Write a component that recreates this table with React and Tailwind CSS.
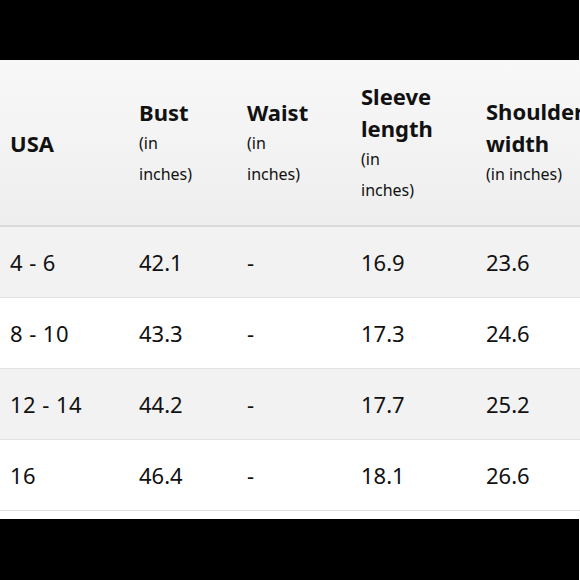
const rows = [
  { usa: '4 - 6', bust: '42.1', waist: '-', sleeve: '16.9', shoulder: '23.6' },
  { usa: '8 - 10', bust: '43.3', waist: '-', sleeve: '17.3', shoulder: '24.6' },
  { usa: '12 - 14', bust: '44.2', waist: '-', sleeve: '17.7', shoulder: '25.2' },
  { usa: '16', bust: '46.4', waist: '-', sleeve: '18.1', shoulder: '26.6' },
]

const cols = 'grid grid-cols-[129px_108px_114px_125px_140px]'

function Sub({ children }) {
  return <div className="text-[16px] leading-[31px] font-normal">{children}</div>
}

export default function App() {
  return (
    <div className="w-[580px] h-[580px] bg-white overflow-hidden flex flex-col font-['Noto_Sans',sans-serif] text-[#111]">
      <div className="h-[60px] bg-black mr-px shrink-0" />

      {/* header */}
      <div className={cols + ' h-[167px] shrink-0 bg-gradient-to-b from-[#f8f8f8] to-[#eeeeee] border-b-2 border-[#dadada] text-[22px] leading-[32px] font-bold'}>
        <div className="pl-[10px] flex items-center">USA</div>
        <div className="pl-[10px] flex flex-col justify-center">
          <div>Bust</div>
          <Sub>(in</Sub>
          <Sub>inches)</Sub>
        </div>
        <div className="pl-[10px] flex flex-col justify-center">
          <div>Waist</div>
          <Sub>(in</Sub>
          <Sub>inches)</Sub>
        </div>
        <div className="pl-[10px] flex flex-col justify-center">
          <div>Sleeve</div>
          <div>length</div>
          <Sub>(in</Sub>
          <Sub>inches)</Sub>
        </div>
        <div className="pl-[10px] flex flex-col justify-center whitespace-nowrap">
          <div>Shoulder</div>
          <div>width</div>
          <Sub>(in inches)</Sub>
        </div>
      </div>

      {/* rows */}
      {rows.map((r, i) => (
        <div
          key={r.usa}
          className={cols + ' h-[71px] shrink-0 items-center border-b border-[#e2e2e2] text-[22px] ' + (i % 2 === 0 ? 'bg-[#f2f2f2]' : 'bg-white')}
        >
          <div className="pl-[10px] tracking-[0.02em]">{r.usa}</div>
          <div className="pl-[10px]">{r.bust}</div>
          <div className="pl-[10px]">{r.waist}</div>
          <div className="pl-[10px]">{r.sleeve}</div>
          <div className="pl-[10px]">{r.shoulder}</div>
        </div>
      ))}

      <div className="h-[8px] shrink-0" />
      <div className="flex-1 bg-black mr-px" />
    </div>
  )
}
